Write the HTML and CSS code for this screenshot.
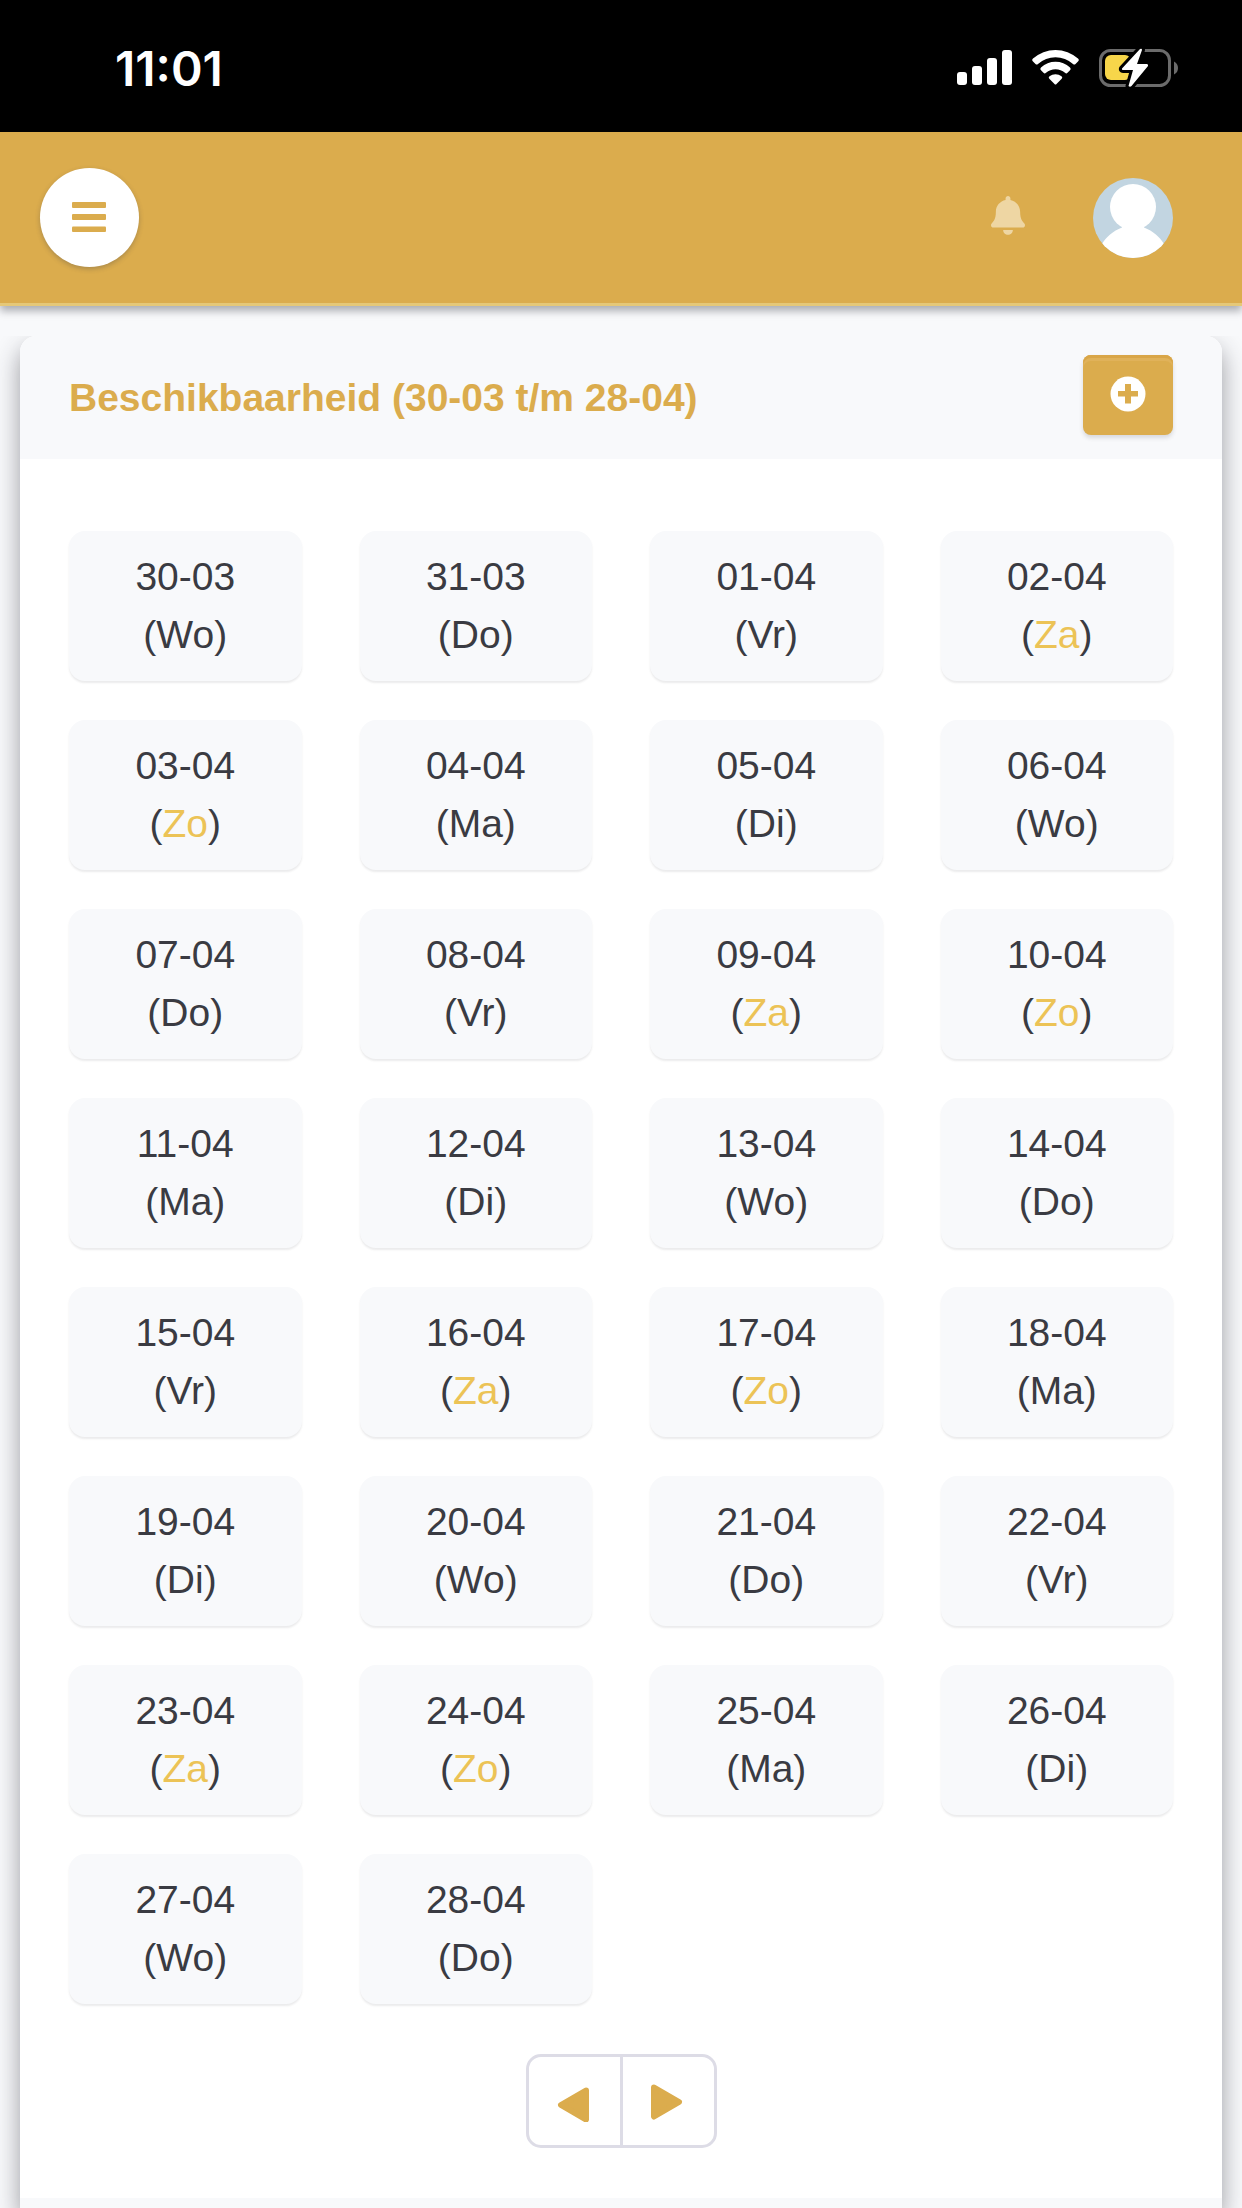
FILE: index.html
```
<!DOCTYPE html>
<html lang="nl">
<head>
<meta charset="utf-8">
<meta name="viewport" content="width=device-width, initial-scale=1">
<title>Beschikbaarheid</title>
<link rel="stylesheet" href="styles.css">
</head>
<body>
<div class="status">
  <span class="status-time">11:01</span>
  <svg class="status-icons" width="222" height="40" viewBox="0 0 222 40" aria-hidden="true">
    <g fill="#fff">
      <rect x="0" y="24" width="10" height="13" rx="3"/>
      <rect x="15" y="18" width="10" height="19" rx="3"/>
      <rect x="30" y="10" width="10" height="27" rx="3"/>
      <rect x="45" y="2" width="10" height="35" rx="3"/>
      <path d="M76 10.600Q74.400 12 76 13.400L78.500 16Q79.700 17 81 16A26 26 0 0 1 116 16Q117.300 17 118.500 16L121 13.400Q122.600 12 121 10.600A33.500 33.500 0 0 0 76 10.600Z"/>
      <path d="M84 19.500Q82.500 21 84 22.300L86.500 24.800Q87.700 26 89 24.800A14.500 14.500 0 0 1 108 24.800Q109.300 26 110.500 24.800L113 22.300Q114.500 21 113 19.500A21.500 21.500 0 0 0 84 19.500Z"/>
      <path d="M92.500 28.300A9.500 9.500 0 0 1 104.500 28.300Q106 29.500 104.700 30.800L99.500 36Q98.500 37 97.500 36L92.300 30.800Q91 29.500 92.500 28.300Z"/>
    </g>
    <rect x="143.500" y="2.500" width="69" height="35" rx="10" fill="none" stroke="#6b6b6b" stroke-width="3"/>
    <path d="M217 13.500Q221 15.500 221 20T217 26.500Z" fill="#6b6b6b"/>
    <rect x="148" y="7" width="26" height="25" rx="6" fill="#f7d64a"/>
    <path d="M183 1L165 20.500Q164.500 22 166 22H176L171.500 38Q173 39.500 174.500 38L191 18Q191.500 16.500 190 16H180L185 2Q185 0 183 1Z" fill="#fff" stroke="#000" stroke-width="6" stroke-linejoin="round"/>
    <path d="M183 1L165 20.500Q164.500 22 166 22H176L171.500 38Q173 39.500 174.500 38L191 18Q191.500 16.500 190 16H180L185 2Q185 0 183 1Z" fill="#fff"/>
  </svg>
</div>

<header class="topbar">
  <button class="menu" type="button" aria-label="Menu">
    <svg width="34" height="30" viewBox="0 0 34 30" fill="currentColor"><rect width="34" height="6" rx="1"/><rect y="12" width="34" height="6" rx="1"/><rect y="24.500" width="34" height="5.500" rx="1"/></svg>
  </button>
  <div class="account">
    <button class="plain" type="button" aria-label="Meldingen">
      <svg width="34" height="44" viewBox="0 0 448 580" fill="#eed6a3"><path d="M224 512c35.320 0 63.970-28.650 63.970-64H160.030c0 35.350 28.650 64 63.970 64zm215.390-149.710c-19.320-20.760-55.470-51.990-55.470-154.290 0-77.700-54.480-139.900-127.940-155.160V32c0-17.670-14.320-32-31.980-32s-31.980 14.330-31.980 32v20.840C118.560 68.100 64.080 130.300 64.080 208c0 102.300-36.150 133.530-55.470 154.290-6 6.450-8.660 14.160-8.610 21.710.11 16.400 12.980 32 32.100 32h383.800c19.120 0 32-15.600 32.100-32 .05-7.550-2.610-15.270-8.610-21.710z"/></svg>
    </button>
    <button class="plain" type="button" aria-label="Profiel">
      <svg width="80" height="80" viewBox="0 0 80 80"><defs><clipPath id="disc"><circle cx="40" cy="40" r="40"/></clipPath></defs><g clip-path="url(#disc)"><rect width="80" height="80" fill="#c2d5e1"/><circle cx="40" cy="29" r="23" fill="#fff"/><path d="M29 46V49.500C20 53 13 59 9 66V80H71V66C67 59 60 53 51 49.500V46Z" fill="#fff"/></g></svg>
    </button>
  </div>
</header>

<main class="page">
  <section class="card">
    <div class="card-head">
      <h1 class="title">Beschikbaarheid (30-03 t/m 28-04)</h1>
      <button class="add" type="button" aria-label="Toevoegen">
        <svg width="36" height="36" viewBox="0 0 36 36"><circle cx="18" cy="18" r="17.500" fill="#fff"/><path d="M15 8H21V15H28V20.500H21V27.500H15V20.500H8V15H15Z" fill="#dbac4d"/></svg>
      </button>
    </div>
    <div class="card-body">
      <div class="days">
        <button class="day" type="button">30-03<br>(Wo)</button>
        <button class="day" type="button">31-03<br>(Do)</button>
        <button class="day" type="button">01-04<br>(Vr)</button>
        <button class="day" type="button">02-04<br>(<span class="weekend">Za</span>)</button>
        <button class="day" type="button">03-04<br>(<span class="weekend">Zo</span>)</button>
        <button class="day" type="button">04-04<br>(Ma)</button>
        <button class="day" type="button">05-04<br>(Di)</button>
        <button class="day" type="button">06-04<br>(Wo)</button>
        <button class="day" type="button">07-04<br>(Do)</button>
        <button class="day" type="button">08-04<br>(Vr)</button>
        <button class="day" type="button">09-04<br>(<span class="weekend">Za</span>)</button>
        <button class="day" type="button">10-04<br>(<span class="weekend">Zo</span>)</button>
        <button class="day" type="button">11-04<br>(Ma)</button>
        <button class="day" type="button">12-04<br>(Di)</button>
        <button class="day" type="button">13-04<br>(Wo)</button>
        <button class="day" type="button">14-04<br>(Do)</button>
        <button class="day" type="button">15-04<br>(Vr)</button>
        <button class="day" type="button">16-04<br>(<span class="weekend">Za</span>)</button>
        <button class="day" type="button">17-04<br>(<span class="weekend">Zo</span>)</button>
        <button class="day" type="button">18-04<br>(Ma)</button>
        <button class="day" type="button">19-04<br>(Di)</button>
        <button class="day" type="button">20-04<br>(Wo)</button>
        <button class="day" type="button">21-04<br>(Do)</button>
        <button class="day" type="button">22-04<br>(Vr)</button>
        <button class="day" type="button">23-04<br>(<span class="weekend">Za</span>)</button>
        <button class="day" type="button">24-04<br>(<span class="weekend">Zo</span>)</button>
        <button class="day" type="button">25-04<br>(Ma)</button>
        <button class="day" type="button">26-04<br>(Di)</button>
        <button class="day" type="button">27-04<br>(Wo)</button>
        <button class="day" type="button">28-04<br>(Do)</button>
      </div>
      <nav class="pager" aria-label="Periode">
        <button class="pager-button" type="button" aria-label="Vorige">
          <svg width="34" height="42" viewBox="0 0 34 42"><path d="M4 25L29 39.500V10.500Z" fill="currentColor" stroke="currentColor" stroke-width="6" stroke-linejoin="round"/></svg>
        </button>
        <button class="pager-button" type="button" aria-label="Volgende">
          <svg width="34" height="42" viewBox="0 0 34 42"><path d="M28 22L3 36.500V7.500Z" fill="currentColor" stroke="currentColor" stroke-width="6" stroke-linejoin="round"/></svg>
        </button>
      </nav>
    </div>
    <div class="card-foot"></div>
  </section>
</main>
</body>
</html>
```
FILE: styles.css
```
* {
  box-sizing: border-box;
}

body {
  display: flex;
  flex-direction: column;
  min-height: 100vh;
  margin: 0;
  background: #f8f9fb;
  color: #3a3b42;
  font-family: "Liberation Sans", Arial, sans-serif;
  font-size: 39px;
}

button {
  padding: 0;
  border: 0;
  color: inherit;
  font: inherit;
  cursor: pointer;
}

svg {
  display: block;
}

.status {
  display: flex;
  align-items: center;
  justify-content: space-between;
  height: 132px;
  padding: 4px 63px 0 115px;
  background: #000;
  color: #fff;
}

.status-time {
  font-family: Inter, sans-serif;
  font-size: 48px;
  font-weight: 600;
}

.topbar {
  display: flex;
  align-items: center;
  justify-content: space-between;
  height: 174px;
  padding: 0 69px 0 40px;
  background: #dbac4d;
  border-bottom: 3px solid #e5c878;
  box-shadow: 0 5px 8px rgba(58, 59, 69, 0.4);
}

.menu {
  display: grid;
  place-items: center;
  width: 99px;
  height: 99px;
  padding: 0 2px 2px 0;
  border-radius: 50%;
  background: #fff;
  color: #dbac4d;
  box-shadow: 0 2px 5px rgba(58, 59, 69, 0.3);
}

.account {
  display: flex;
  align-items: center;
  gap: 68px;
}

.plain {
  background: none;
}

.page {
  display: flex;
  flex: 1;
  margin-top: 30px;
  padding: 0 20px;
  overflow: hidden;
}

.card {
  display: flex;
  flex: 1;
  flex-direction: column;
  border-radius: 16px 16px 0 0;
  background: #fff;
  box-shadow: 0 12px 24px rgba(40, 40, 50, 0.45);
}

.card-head {
  display: flex;
  align-items: center;
  justify-content: space-between;
  padding: 19px 49px 24px;
  border-radius: 16px 16px 0 0;
  background: #f8f9fb;
}

.title {
  margin: 0;
  padding-top: 6px;
  color: #dbac4d;
  font-size: 39px;
  line-height: 60px;
}

.add {
  display: grid;
  place-items: center;
  width: 90px;
  height: 80px;
  padding-bottom: 3px;
  border-radius: 8px;
  background: #dbac4d;
  box-shadow: 0 3px 4px rgba(58, 59, 69, 0.16), inset 0 3px 0 #d9a648, inset 0 6px 0 #e0b25a;
}

.card-body {
  padding: 72px 49px 50px;
}

.days {
  display: grid;
  grid-template-columns: repeat(4, 1fr);
  gap: 39px 58px;
}

.day {
  padding: 17px 0;
  border-radius: 16px;
  background: #f8f9fb;
  box-shadow: 0 2px 2px rgba(58, 59, 69, 0.1);
  line-height: 58px;
}

.weekend {
  color: #ecc356;
}

.pager {
  display: flex;
  width: max-content;
  margin: 50px auto 0;
  border: 3px solid #dddce6;
  border-radius: 15px;
}

.pager-button {
  display: grid;
  place-items: center;
  width: 91px;
  height: 88px;
  background: none;
  color: #dbac4d;
}

.pager-button + .pager-button {
  width: 94px;
  border-left: 3px solid #dddce6;
}

.card-foot {
  flex: 1;
  min-height: 10px;
  background: #f8f9fb;
}
```
